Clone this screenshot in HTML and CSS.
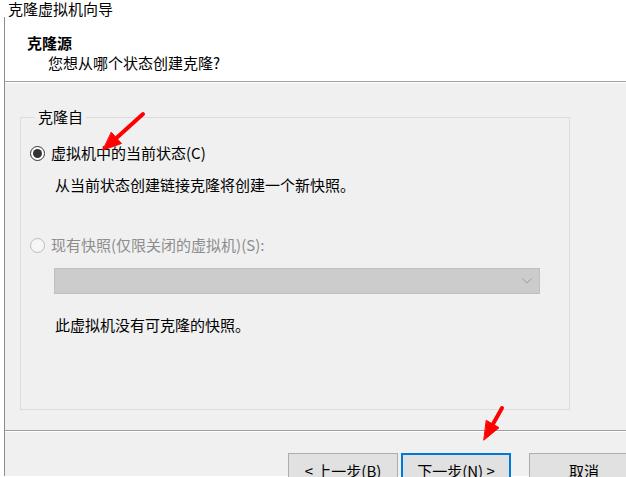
FILE: index.html
```html
<!DOCTYPE html>
<html lang="zh-CN">
<head>
    <meta charset="UTF-8">
    <meta name="viewport" content="width=device-width, initial-scale=1.0">
    <title>克隆虚拟机向导</title>
    <link rel="stylesheet" href="styles.css">
</head>
<body>
    <div class="caption">克隆虚拟机向导</div>
    <div class="window">
        <div class="header">
            <div class="header-title">克隆源</div>
            <div class="header-sub">您想从哪个状态创建克隆?</div>
        </div>

        <div class="content">
            <fieldset class="group">
                <legend>克隆自</legend>
                <div class="option">
                    <span class="radio checked"></span>
                    <span>虚拟机中的当前状态(C)</span>
                </div>
                <div class="desc">从当前状态创建链接克隆将创建一个新快照。</div>
                <div class="option disabled">
                    <span class="radio"></span>
                    <span>现有快照(仅限关闭的虚拟机)(S):</span>
                </div>
                <div class="select">
                    <svg width="10" height="6" viewBox="0 0 10 6"><path d="M0.5 0.5 L5 5 L9.5 0.5" fill="none" stroke="#9a9a9a" stroke-width="1"/></svg>
                </div>
                <div class="desc note">此虚拟机没有可克隆的快照。</div>
            </fieldset>
        </div>

        <div class="footer">
            <button class="btn">&lt; 上一步(B)</button>
            <button class="btn default">下一步(N) &gt;</button>
            <button class="btn cancel">取消</button>
        </div>
    </div>

    <!-- red annotation arrows -->
    <svg class="marks" width="626" height="477" viewBox="0 0 626 477">
        <g fill="#f00" stroke="#f00" stroke-linecap="round">
            <line x1="143" y1="114" x2="117" y2="137.5" stroke-width="4"/>
            <polygon points="103,150 121.5,143.5 111.5,132.5" stroke-width="1"/>
            <line x1="502" y1="408" x2="493" y2="424" stroke-width="4"/>
            <polygon points="484,440 499,427.7 486.5,420.5" stroke-width="1"/>
        </g>
    </svg>
</body>
</html>
```

FILE: styles.css
```css
body {
    margin: 0;
    padding: 0;
    width: 626px;
    height: 477px;
    overflow: hidden;
    background: #fff;
    font-family: "Noto Sans CJK SC", "Noto Sans", sans-serif;
    font-size: 15px;
    color: #000;
    position: relative;
}
.caption {
    height: 17px;
    line-height: 17px;
    padding-left: 8px;
    white-space: nowrap;
}
.window {
    margin-left: 4px;
    border-left: 1px solid #8c8c8c;
    background: #f0f0f0;
}
.header {
    background: #fff;
    padding: 16px 0 8px 22px;
    border-bottom: 1px solid #a0a0a0;
    box-shadow: 0 1px 0 #fff;
    line-height: 20px;
}
.header-title {
    font-weight: bold;
}
.header-sub {
    padding-left: 21px;
}
.content {
    padding-top: 25px;
}
.group {
    box-sizing: border-box;
    width: 550px;
    min-width: 0;
    margin: 0 0 0 15px;
    padding: 0 0 74px 9px;
    border: 1px solid #dcdcdc;
    line-height: 20px;
}
.group legend {
    margin-left: 5px;
    padding: 0 3px;
    line-height: 20px;
}
.option {
    display: flex;
    align-items: center;
    gap: 6px;
    height: 20px;
    margin-top: 16px;
}
.option.disabled {
    margin-top: 40px;
    color: #8d8d8d;
}
.radio {
    box-sizing: border-box;
    width: 15px;
    height: 15px;
    border: 1px solid #333;
    border-radius: 50%;
    background: #fff;
    display: flex;
    align-items: center;
    justify-content: center;
    flex-shrink: 0;
}
.radio.checked::after {
    content: "";
    width: 9px;
    height: 9px;
    border-radius: 50%;
    background: #333;
}
.option.disabled .radio {
    border-color: #bcbcbc;
    background: #f6f6f6;
}
.desc {
    margin-left: 25px;
    margin-top: 12px;
    height: 20px;
}
.select {
    box-sizing: border-box;
    width: 486px;
    height: 26px;
    margin: 13px 0 0 24px;
    background: #cccccc;
    border: 1px solid #bfbfbf;
    display: flex;
    align-items: center;
    justify-content: flex-end;
    padding-right: 7px;
}
.desc.note {
    margin-top: 21px;
}
.footer {
    margin-top: 20px;
    border-top: 1px solid #a0a0a0;
    box-shadow: inset 0 1px 0 #fff;
    padding: 22px 0 0 283px;
    height: 23px;
    display: flex;
    align-items: flex-start;
    gap: 3px;
}
.btn {
    box-sizing: border-box;
    flex-shrink: 0;
    width: 110px;
    height: 35px;
    background: #e1e1e1;
    border: 1px solid #adadad;
    font-family: inherit;
    font-size: 15px;
    line-height: 20px;
    color: #000;
    padding: 0;
}
.btn.default {
    border: 2px solid #0078d7;
}
.btn.cancel {
    margin-left: 15px;
}
.marks {
    position: absolute;
    left: 0;
    top: 0;
    pointer-events: none;
}
```
